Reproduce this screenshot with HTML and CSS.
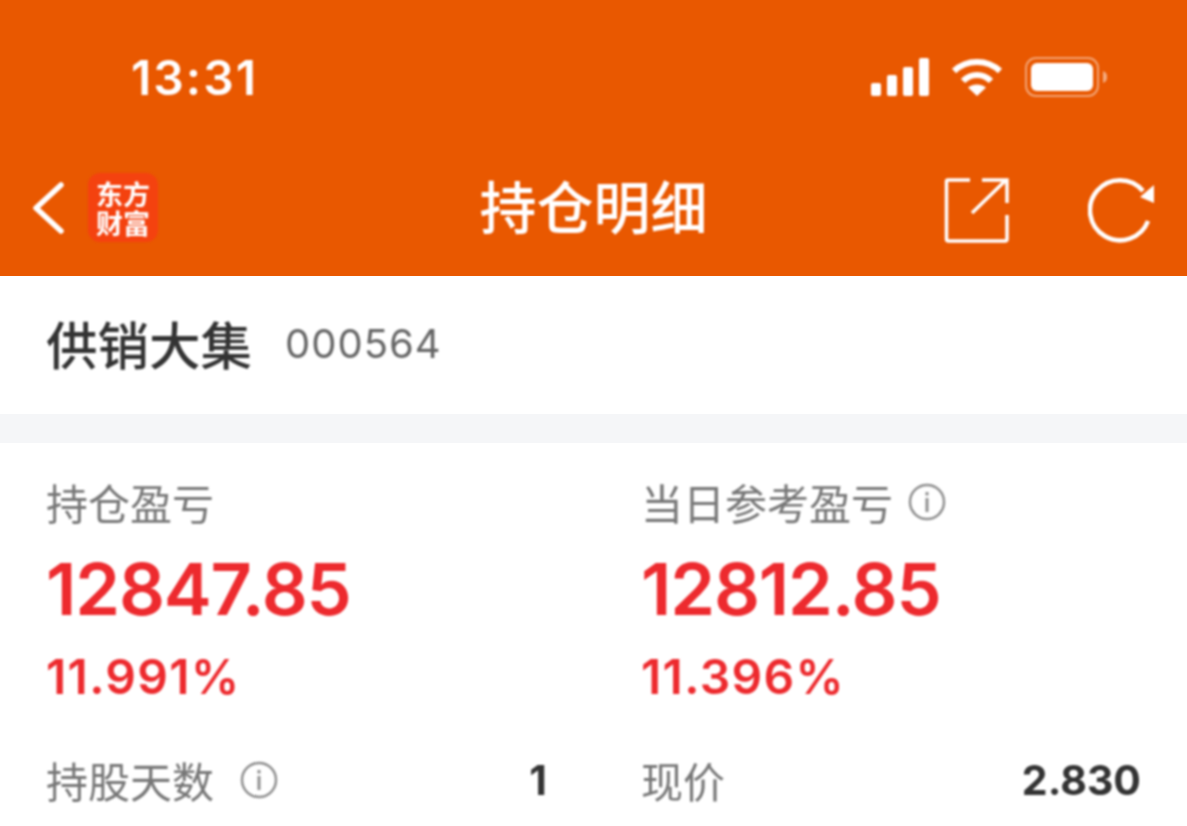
FILE: index.html
```html
<!DOCTYPE html>
<html lang="zh-CN">
<head>
<meta charset="utf-8">
<title>持仓明细</title>
<link rel="stylesheet" href="styles.css">
</head>
<body>
<div class="page">
  <header class="header">
    <div class="status soft">
      <span class="time">13:31</span>
      <div class="status-icons">
        <svg class="i-signal" width="60" height="38" viewBox="0 0 60 38"><g fill="#fff"><rect x="1" y="25" width="10" height="13" rx="2"/><rect x="17" y="17" width="10" height="21" rx="2"/><rect x="33" y="9" width="10" height="29" rx="2"/><rect x="49" y="0" width="10" height="38" rx="2"/></g></svg>
        <svg class="i-wifi" width="52" height="38" viewBox="0 0 52 38"><g fill="none" stroke="#fff" stroke-width="6"><path d="M3 13C16 1 36 1 49 13"/><path d="M12 23C20 15 32 15 40 23"/></g><path d="M17 29.500C22 25.500 30 25.500 35 29.500L26 38Z" fill="#fff"/></svg>
        <svg class="i-batt" width="84" height="40" viewBox="0 0 84 40"><rect x="1" y="1" width="72" height="38" rx="10" fill="none" stroke="#fff" stroke-opacity=".45" stroke-width="2"/><rect x="6" y="6" width="62" height="28" rx="6" fill="#fff"/><path d="M78 14c3 1 4 3 4 6s-1 5-4 6z" fill="#fff" fill-opacity=".5"/></svg>
      </div>
    </div>
    <nav class="nav soft">
      <div class="nav-left">
        <svg width="32" height="52" viewBox="0 0 32 52"><path d="M29 3L4 26L29 49" fill="none" stroke="#fff" stroke-width="5.500" stroke-linecap="round" stroke-linejoin="round"/></svg>
        <div class="logo"><span class="logo-text">东方财富</span></div>
      </div>
      <h1 class="title">持仓明细</h1>
      <div class="nav-right">
        <svg width="66" height="66" viewBox="0 0 66 66"><path d="M27 3H5a1.500 1.500 0 0 0-1.500 1.500V62a2 2 0 0 0 2 2H62a2 2 0 0 0 2-2V38" fill="none" stroke="#fff" stroke-width="3.500"/><path d="M29 36L63 3M39 3H64V26" fill="none" stroke="#fff" stroke-width="3.500"/></svg>
        <svg width="68" height="66" viewBox="0 0 68 66"><path d="M55 14A30 30 0 1 0 60 44" fill="none" stroke="#fff" stroke-width="4.500"/><path d="M66 8V26L52 20Z" fill="#fff"/></svg>
      </div>
    </nav>
  </header>
  <section class="stock">
    <span class="stock-name soft">供销大集</span>
    <span class="stock-code soft">000564</span>
  </section>
  <section class="stats">
    <div class="col soft">
      <div class="label">持仓盈亏</div>
      <div class="big">12847.85</div>
      <div class="pct">11.991%</div>
      <div class="row"><span class="label">持股天数<svg class="info info-gap" viewBox="0 0 38 38"><use href="#info"/></svg></span><span class="val">1</span></div>
    </div>
    <div class="col soft">
      <div class="label">当日参考盈亏<svg class="info" viewBox="0 0 38 38"><use href="#info"/></svg></div>
      <div class="big">12812.85</div>
      <div class="pct">11.396%</div>
      <div class="row"><span class="label">现价</span><span class="val">2.830</span></div>
    </div>
  </section>
  <svg class="defs" width="0" height="0"><defs><g id="info"><circle cx="19" cy="19" r="17" fill="none" stroke="#8f8f8f" stroke-width="2.500"/><rect x="17.500" y="15" width="3" height="14" fill="#8f8f8f"/><rect x="17.500" y="9" width="3" height="3.500" fill="#8f8f8f"/></g></defs></svg>
</div>
</body>
</html>
```
FILE: styles.css
```css
* { box-sizing: border-box; }
html, body { margin: 0; height: 100%; background: #fff; overflow: hidden; }
.page {
  width: 1187px;
  height: 826px;
  overflow: hidden;
  font-family: Inter, "Noto Sans CJK SC", sans-serif;
}
.soft { filter: blur(1px); }
.header { height: 276px; background: #e95800; color: #fff; display: flex; flex-direction: column; }
.status { height: 150px; padding: 53px 78px 0 131px; display: flex; justify-content: space-between; align-items: flex-start; }
.time { font-size: 48px; line-height: 50px; font-weight: 600; letter-spacing: 2px; }
.status-icons { display: flex; align-items: center; gap: 21px; padding-top: 4px; }
.i-wifi { margin-right: 1px; }
.nav { position: relative; display: flex; justify-content: space-between; align-items: center; padding: 0 31px 0 32px; height: 120px; }
.nav-left { display: flex; align-items: center; gap: 24px; margin-top: -5px; }
.logo {
  width: 70px; height: 69px; border-radius: 12px; background: #f4420f;
  display: flex; align-items: center; justify-content: center;
  font-family: "Noto Sans CJK SC", serif; font-size: 27px; line-height: 29px; font-weight: 700;
}
.logo-text { width: 54px; text-align: center; }
.title {
  position: absolute; left: 0; right: 0; top: 19px; margin: 0; text-align: center;
  font-size: 57px; line-height: 70px; font-weight: 500; font-family: "Noto Sans CJK SC", sans-serif;
}
.nav-right { display: flex; align-items: center; gap: 79px; }
.stock { height: 138px; display: flex; align-items: center; padding: 0 47px 6px 46px; gap: 33px; }
.stock-name { font-size: 51.500px; font-weight: 500; color: #333; font-family: "Noto Sans CJK SC", sans-serif; }
.stock-code { font-size: 40px; color: #666; letter-spacing: 1px; padding-top: 3px; }
.stats { border-top: 29px solid #f5f6f8; display: grid; grid-template-columns: 595px 500px; padding: 30px 0 0 46px; }
.col { display: flex; flex-direction: column; }
.label { font-size: 42px; line-height: 58px; color: #777; display: flex; align-items: center; font-family: "Noto Sans CJK SC", sans-serif; }
.info { width: 38px; height: 38px; margin-left: 15px; }
.info-gap { margin-left: 26px; }
.big { font-size: 72px; line-height: 88px; font-weight: 600; color: #ed2a2e; letter-spacing: -1.200px; margin-top: 14px; }
.pct { font-size: 48px; line-height: 60px; font-weight: 600; color: #ed2a2e; letter-spacing: 1.300px; margin-top: 14px; }
.row { display: flex; justify-content: space-between; align-items: center; margin-top: 44px; padding-right: 94px; }
.col:last-child .row { padding-right: 0; }
.val { font-size: 41px; font-weight: 700; color: #333; }
.defs { position: absolute; }
```
